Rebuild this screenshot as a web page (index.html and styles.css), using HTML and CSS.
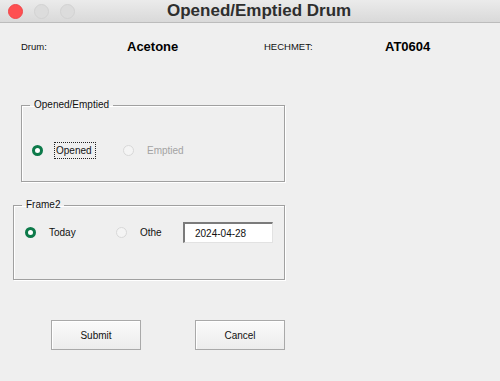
FILE: index.html
```html
<!DOCTYPE html>
<html lang="en">
<head>
    <meta charset="UTF-8">
    <title>Opened/Emptied Drum</title>
    <link rel="stylesheet" href="styles.css">
</head>
<body>
    <div class="window">
        <div class="titlebar">
            <div class="lights">
                <span class="light red"></span>
                <span class="light"></span>
                <span class="light"></span>
            </div>
            <div class="title">Opened/Emptied Drum</div>
        </div>

        <div class="info">
            <span class="caption">Drum:</span>
            <span class="value">Acetone</span>
            <span class="caption">HECHMET:</span>
            <span class="value">AT0604</span>
        </div>

        <fieldset class="frame frame-status">
            <legend>Opened/Emptied</legend>
            <div class="options">
                <div class="option">
                    <span class="radio checked"></span>
                    <span class="label focused">Opened</span>
                </div>
                <div class="option disabled">
                    <span class="radio"></span>
                    <span class="label">Emptied</span>
                </div>
            </div>
        </fieldset>

        <fieldset class="frame frame-date">
            <legend>Frame2</legend>
            <div class="options">
                <div class="option">
                    <span class="radio checked"></span>
                    <span class="label">Today</span>
                </div>
                <div class="option short">
                    <span class="radio"></span>
                    <span class="label">Othe</span>
                </div>
                <input type="text" class="date-input" value="2024-04-28">
            </div>
        </fieldset>

        <div class="buttons">
            <button>Submit</button>
            <button>Cancel</button>
        </div>
    </div>
</body>
</html>
```

FILE: styles.css
```css
body {
    margin: 0;
    background-color: #efefef;
    font-family: "Liberation Sans", Arial, sans-serif;
    color: #111;
}
.window {
    width: 500px;
    height: 381px;
    overflow: hidden;
    background-color: #efefef;
}
.titlebar {
    height: 22px;
    display: flex;
    align-items: center;
    background: linear-gradient(#ebebeb, #d9d9d9);
    border-bottom: 1px solid #bcbcbc;
}
.lights {
    display: flex;
    gap: 11px;
    margin-left: 8px;
}
.light {
    width: 13px;
    height: 13px;
    border-radius: 50%;
    background-color: #dcdcdc;
    border: 1px solid #d2d2d2;
}
.light.red {
    background-color: #fe4f51;
    border-color: #f0474a;
}
.title {
    margin-left: 92px;
    font-size: 17px;
    font-weight: bold;
    color: #2e2e2e;
}
.info {
    display: grid;
    grid-template-columns: 106px 137px 121px auto;
    align-items: center;
    height: 16px;
    margin-top: 15px;
    padding-left: 21px;
}
.caption {
    font-size: 9.5px;
}
.value {
    font-size: 13px;
    font-weight: bold;
    color: #000;
}
.frame {
    box-sizing: border-box;
    margin: 0;
    padding: 0;
    border: 1px solid #a0a0a0;
    box-shadow: 1px 1px 0 #fff, inset 1px 1px 0 #fff;
    min-width: 0;
}
.frame legend {
    margin-left: 8px;
    padding: 0 4px;
    font-size: 10px;
    line-height: 12px;
}
.frame-status {
    margin-top: 45px;
    margin-left: 21px;
    width: 264px;
    height: 83px;
}
.frame-status .options {
    padding: 29px 0 0 10px;
}
.frame-date {
    margin-top: 17px;
    margin-left: 13px;
    width: 272px;
    height: 81px;
}
.frame-date .options {
    padding: 11px 0 0 11px;
}
.options {
    display: flex;
    align-items: center;
    height: 21px;
}
.option {
    width: 91px;
    display: flex;
    align-items: center;
    font-size: 10px;
}
.option.short {
    width: 67px;
}
.radio {
    box-sizing: border-box;
    width: 11px;
    height: 11px;
    border-radius: 50%;
    border: 1px solid #d8d8d8;
    background-color: #f4f4f4;
}
.radio.checked {
    border: 3.5px solid #0d7a4a;
    background-color: #fff;
}
.label {
    margin-left: 11px;
    padding: 2px 3px 2px 1px;
    border: 1px dotted transparent;
}
.label.focused {
    border-color: #222;
}
.disabled .label {
    color: #a3a3a3;
}
.date-input {
    box-sizing: border-box;
    width: 90px;
    height: 21px;
    margin: 0;
    padding: 0 0 0 10px;
    font-family: "Liberation Sans", Arial, sans-serif;
    font-size: 10px;
    color: #111;
    background-color: #fff;
    border-top: 2px solid #7b7b7b;
    border-left: 2px solid #7b7b7b;
    border-right: 1px solid #e2e2e2;
    border-bottom: 1px solid #e2e2e2;
    outline: none;
}
.buttons {
    display: flex;
    gap: 54px;
    margin-top: 40px;
    margin-left: 51px;
}
button {
    width: 90px;
    height: 30px;
    font-family: "Liberation Sans", Arial, sans-serif;
    font-size: 10px;
    color: #111;
    background: linear-gradient(#fafafa, #ececec);
    border: 1px solid #a9a9a9;
    box-shadow: inset 1px 1px 0 #fff;
    padding: 0;
}
```
